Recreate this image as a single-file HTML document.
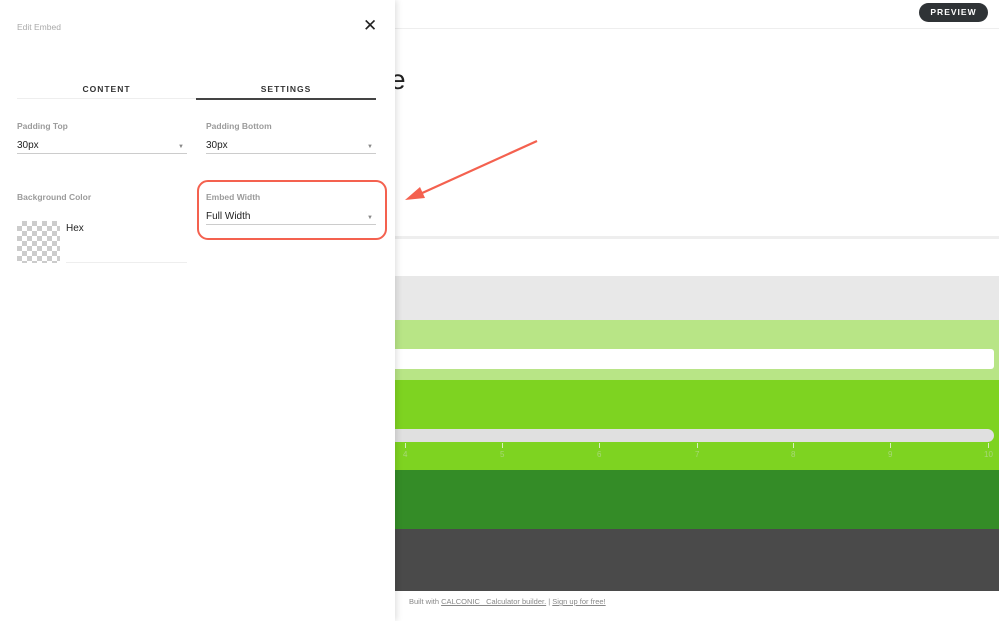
<!DOCTYPE html>
<html><head><meta charset="utf-8"><style>
*{margin:0;padding:0;box-sizing:border-box}
body{width:999px;height:621px;position:relative;overflow:hidden;background:#fff;font-family:"Liberation Sans",sans-serif}
.a{position:absolute}
.lbl{font-size:8.5px;font-weight:bold;color:#9b9b9b}
.sel{font-size:10px;color:#222;border-bottom:1px solid #ccc;height:14px;line-height:11px}
.car{position:absolute;right:3px;top:2px;font-size:6px;color:#888}
.tick{position:absolute;top:443px;width:1px;height:5px;background:#d8efc0}
.tl{position:absolute;top:450px;font-size:8px;color:#a8d878}
</style></head><body>
<div class="a" style="left:395px;top:28px;width:604px;height:1px;background:#eee"></div>
<div class="a" style="left:919px;top:3px;width:69px;height:19px;border-radius:10px;background:#2f3336;color:#fff;font-size:8.5px;font-weight:bold;letter-spacing:1px;text-align:center;line-height:19px">PREVIEW</div>
<div class="a" style="left:390px;top:64px;font-size:28px;color:#222">e</div>
<svg class="a" style="left:395px;top:130px" width="150" height="80"><line x1="142" y1="11" x2="25" y2="64" stroke="#f4614f" stroke-width="2.2"/><polygon points="10,70 25,57 30,68" fill="#f4614f"/></svg>
<div class="a" style="left:395px;top:236px;width:604px;height:3px;background:#eee"></div>
<div class="a" style="left:395px;top:276px;width:604px;height:44px;background:#e8e8e8"></div>
<div class="a" style="left:395px;top:320px;width:604px;height:60px;background:#b8e586"></div>
<div class="a" style="left:395px;top:349px;width:599px;height:20px;background:#fff;border-radius:0 3px 3px 0"></div>
<div class="a" style="left:395px;top:380px;width:604px;height:90px;background:#7ed321"></div>
<div class="a" style="left:395px;top:429px;width:599px;height:13px;background:#e0e0e0;border-radius:0 7px 7px 0"></div>
<div class="tick" style="left:405px"></div><div class="tick" style="left:502px"></div><div class="tick" style="left:599px"></div><div class="tick" style="left:697px"></div><div class="tick" style="left:793px"></div><div class="tick" style="left:890px"></div><div class="tick" style="left:988px"></div>
<div class="tl" style="left:403px">4</div><div class="tl" style="left:500px">5</div><div class="tl" style="left:597px">6</div><div class="tl" style="left:695px">7</div><div class="tl" style="left:791px">8</div><div class="tl" style="left:888px">9</div><div class="tl" style="left:984px">10</div>
<div class="a" style="left:395px;top:470px;width:604px;height:59px;background:#348c27"></div>
<div class="a" style="left:395px;top:529px;width:604px;height:62px;background:#4a4a4a"></div>
<div class="a" style="left:409px;top:597px;font-size:7.5px;color:#888">Built with <u>CALCONIC_ Calculator builder.</u> | <u>Sign up for free!</u></div>

<div class="a" style="left:0;top:0;width:395px;height:621px;background:#fff;box-shadow:2px 0 6px rgba(0,0,0,.12)">
<div class="a" style="left:17px;top:22px;font-size:8.5px;color:#aaa">Edit Embed</div>
<div class="a" style="left:363px;top:16px;font-size:17px;color:#222">✕</div>
<div class="a" style="left:17px;top:84px;width:179px;text-align:center;font-size:8.5px;font-weight:bold;letter-spacing:1px;color:#333">CONTENT</div>
<div class="a" style="left:17px;top:98px;width:179px;height:1px;background:#eee"></div>
<div class="a" style="left:196px;top:84px;width:180px;text-align:center;font-size:8.5px;font-weight:bold;letter-spacing:1px;color:#333">SETTINGS</div>
<div class="a" style="left:196px;top:98px;width:180px;height:2px;background:#444"></div>
<div class="a lbl" style="left:17px;top:121px">Padding Top</div>
<div class="a sel" style="left:17px;top:140px;width:170px">30px<span class="car">▼</span></div>
<div class="a lbl" style="left:206px;top:121px">Padding Bottom</div>
<div class="a sel" style="left:206px;top:140px;width:170px">30px<span class="car">▼</span></div>
<div class="a lbl" style="left:17px;top:192px">Background Color</div>
<div class="a" style="left:17px;top:221px;width:43px;height:42px;background-color:#fff;background-image:linear-gradient(45deg,#ccc 25%,transparent 25%,transparent 75%,#ccc 75%),linear-gradient(45deg,#ccc 25%,transparent 25%,transparent 75%,#ccc 75%);background-size:10px 10px;background-position:0 0,5px 5px"></div>
<div class="a" style="left:66px;top:223px;font-size:10px;color:#222">Hex</div>
<div class="a" style="left:66px;top:262px;width:121px;height:1px;background:#eee"></div>
<div class="a lbl" style="left:206px;top:192px">Embed Width</div>
<div class="a sel" style="left:206px;top:211px;width:170px">Full Width<span class="car">▼</span></div>
<div class="a" style="left:197px;top:180px;width:190px;height:60px;border:2.5px solid #f4614f;border-radius:11px"></div>
</div>
</body></html>
